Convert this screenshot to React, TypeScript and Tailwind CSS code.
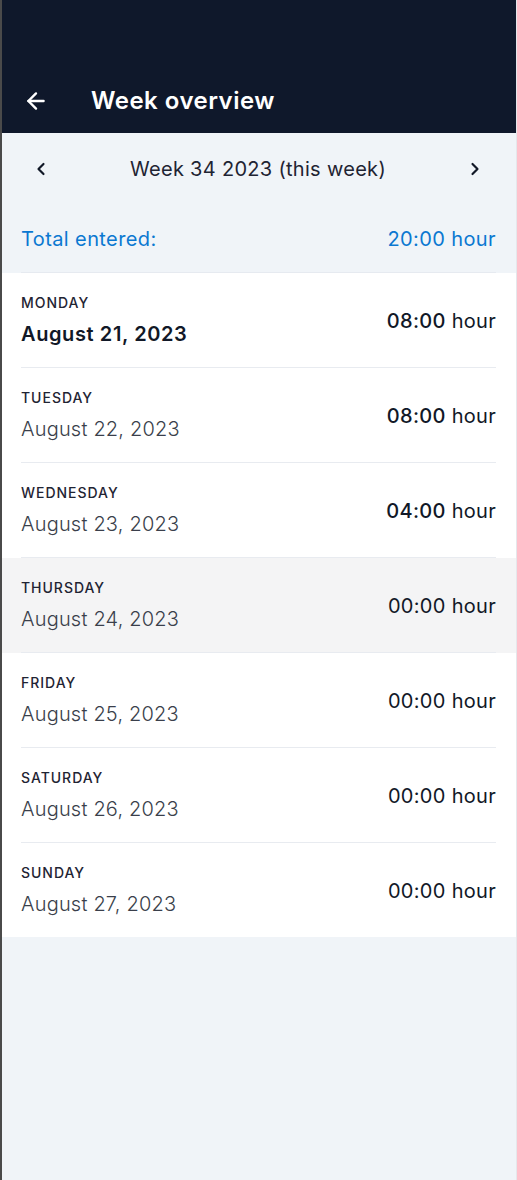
import { ArrowLeft, ChevronLeft, ChevronRight } from "lucide-react";

const days = [
  { day: "Monday", date: "August 21, 2023", hours: "08:00", today: true },
  { day: "Tuesday", date: "August 22, 2023", hours: "08:00" },
  { day: "Wednesday", date: "August 23, 2023", hours: "04:00" },
  { day: "Thursday", date: "August 24, 2023", hours: "00:00", muted: true },
  { day: "Friday", date: "August 25, 2023", hours: "00:00" },
  { day: "Saturday", date: "August 26, 2023", hours: "00:00" },
  { day: "Sunday", date: "August 27, 2023", hours: "00:00" },
];

function DayRow({
  day,
  date,
  hours,
  today,
  muted,
  last,
}: {
  day: string;
  date: string;
  hours: string;
  today?: boolean;
  muted?: boolean;
  last?: boolean;
}) {
  const filled = hours !== "00:00";
  return (
    <div className={muted ? "bg-[#f4f4f5]" : "bg-white"}>
      <div
        className={
          "ml-[19px] mr-[20px] flex items-center justify-between pt-[20px] pb-[19px] " +
          (last ? "" : "border-b border-[#e8ebf0]")
        }
      >
        <div>
          <div className="text-[14px] leading-5 font-medium uppercase tracking-[0.07em] text-[#1f2433]">
            {day}
          </div>
          <div
            className={
              "mt-[7px] text-[20px] leading-7 " +
              (today
                ? "font-semibold tracking-[0.03em] text-[#111827]"
                : "font-light tracking-[0.01em] text-[#3a3f4b]")
            }
          >
            {date}
          </div>
        </div>
        <div className="text-[20px] tracking-[0.015em] text-[#111827]">
          <span className={filled ? "font-[550]" : "font-normal"}>{hours}</span>{" "}
          <span className="font-normal">hour</span>
        </div>
      </div>
    </div>
  );
}

export default function App() {
  return (
    <div
      className="min-h-[1180px] bg-[#f0f4f8] border-l-2 border-[#4a4a4a] border-r border-r-[#e5e7eb]"
      style={{ fontFamily: "Inter, 'Noto Sans', sans-serif" }}
    >
      <header className="bg-[#0f182b] pt-[74px]">
        <div className="flex h-[59px] items-center pb-[6px] pl-[21px]">
          <ArrowLeft className="h-[26px] w-[26px] text-white" strokeWidth={2.2} />
          <h1 className="ml-[42px] text-[24px] font-semibold tracking-[0.02em] text-white">
            Week overview
          </h1>
        </div>
      </header>

      <div className="flex h-[72px] items-center justify-between pl-[29px] pr-[31px]">
        <ChevronLeft className="h-[20px] w-[20px] text-[#111827]" strokeWidth={2.6} />
        <span className="text-[20px] tracking-[0.015em] text-[#1f2433]">Week 34 2023 (this week)</span>
        <ChevronRight className="h-[20px] w-[20px] text-[#111827]" strokeWidth={2.6} />
      </div>

      <div className="ml-[19px] mr-[20px] flex h-[68px] items-center justify-between border-b border-[#e6eaf0] text-[20px] tracking-[0.02em] text-[#0b78d1]">
        <span>Total entered:</span>
        <span>20:00 hour</span>
      </div>

      <div>
        {days.map((d, i) => (
          <DayRow key={d.day} {...d} last={i === days.length - 1} />
        ))}
      </div>
    </div>
  );
}
